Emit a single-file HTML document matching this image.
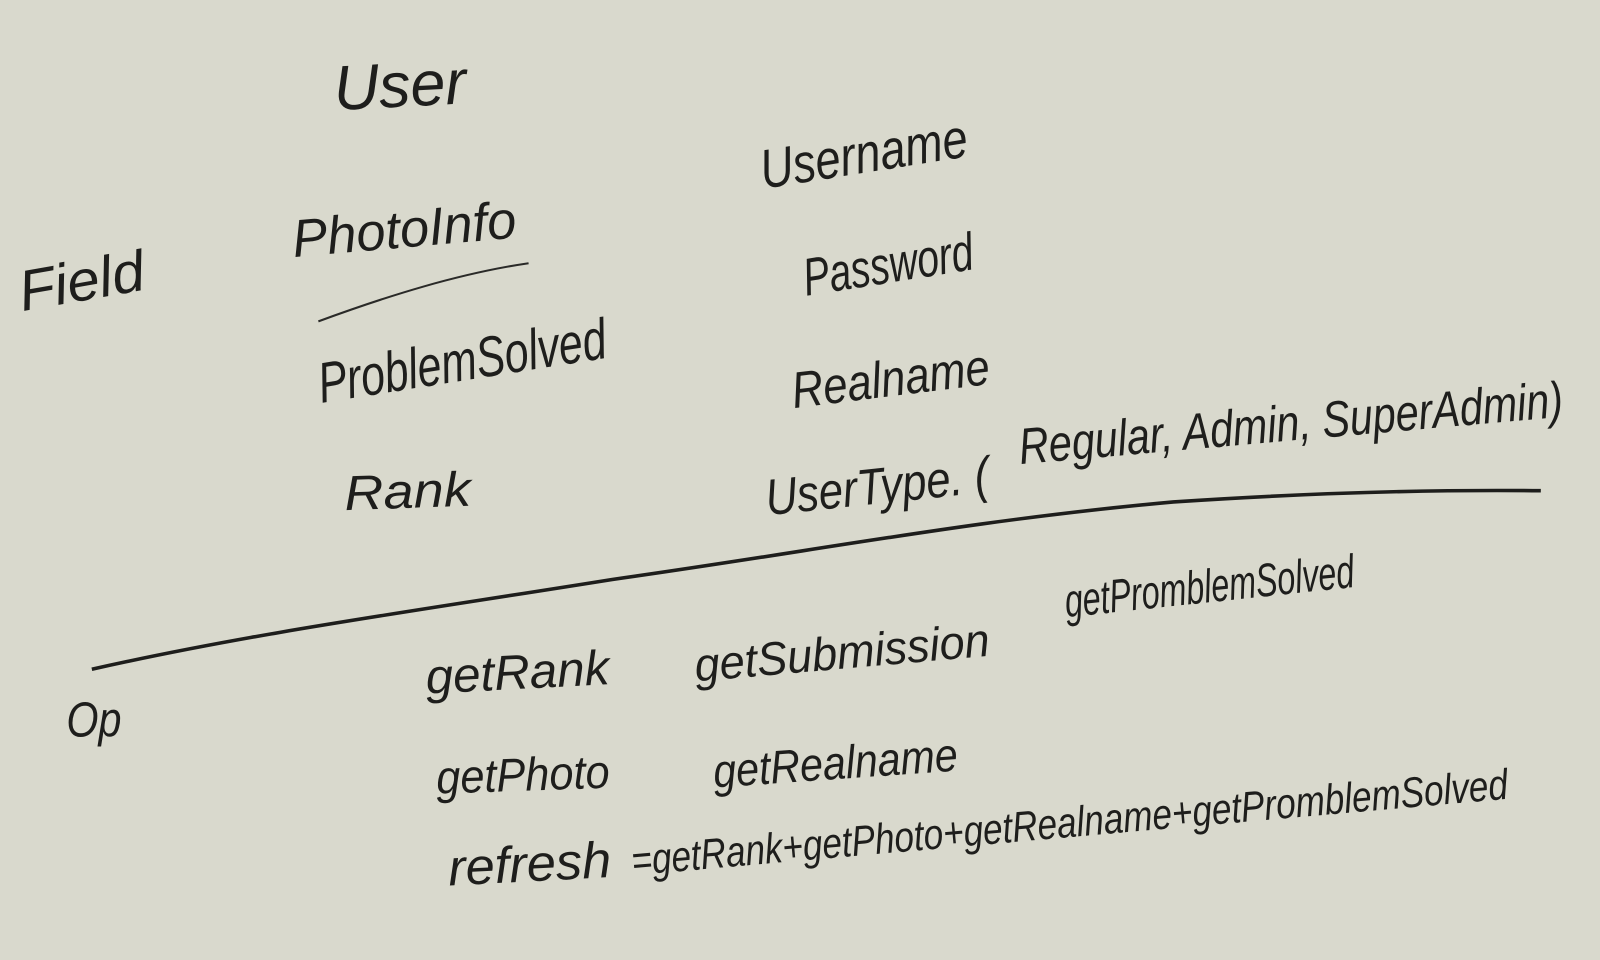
<!DOCTYPE html>
<html><head><meta charset="utf-8"><style>
html,body{margin:0;padding:0;background:#d9d9cd;width:1600px;height:960px;overflow:hidden}
svg{display:block}
text{font-family:"Liberation Sans",sans-serif;font-style:italic;fill:#1e1e1c}
</style></head><body>
<svg width="1600" height="960" viewBox="0 0 1568 941" preserveAspectRatio="none">
<rect width="1568" height="941" fill="#d9d9cd"/>
<g>
<text x="328" y="108" font-size="62" textLength="130" lengthAdjust="spacingAndGlyphs" transform="rotate(-3 328 108)">User</text>
<text x="22" y="305" font-size="56" textLength="124" lengthAdjust="spacingAndGlyphs" transform="rotate(-10 22 305)">Field</text>
<text x="288" y="252" font-size="52" textLength="220" lengthAdjust="spacingAndGlyphs" transform="rotate(-5 288 252)">PhotoInfo</text>
<path d="M312 315 C380 290 450 268 518 258" stroke="#2a2a28" stroke-width="2" fill="none"/>
<text x="315" y="395" font-size="56" textLength="285" lengthAdjust="spacingAndGlyphs" transform="rotate(-9 315 395)">ProblemSolved</text>
<text x="338" y="500" font-size="48" textLength="124" lengthAdjust="spacingAndGlyphs" transform="rotate(-2 338 500)">Rank</text>
<text x="748" y="185" font-size="54" textLength="205" lengthAdjust="spacingAndGlyphs" transform="rotate(-9 748 185)">Username</text>
<text x="790" y="290" font-size="52" textLength="168" lengthAdjust="spacingAndGlyphs" transform="rotate(-9 790 290)">Password</text>
<text x="778" y="400" font-size="50" textLength="195" lengthAdjust="spacingAndGlyphs" transform="rotate(-7 778 400)">Realname</text>
<text x="752" y="505" font-size="50" textLength="220" lengthAdjust="spacingAndGlyphs" transform="rotate(-6 752 505)">UserType. (</text>
<text x="1000" y="455" font-size="50" textLength="535" lengthAdjust="spacingAndGlyphs" transform="rotate(-5 1000 455)">Regular, Admin, SuperAdmin)</text>
<path d="M90 656 C250 620 400 600 600 568 C800 540 950 510 1150 492 C1300 482 1420 480 1510 481" stroke="#1e1e1c" stroke-width="3.5" fill="none"/>
<text x="65" y="722" font-size="48" textLength="54" lengthAdjust="spacingAndGlyphs">Op</text>
<text x="418" y="680" font-size="48" textLength="180" lengthAdjust="spacingAndGlyphs" transform="rotate(-3 418 680)">getRank</text>
<text x="682" y="668" font-size="46" textLength="290" lengthAdjust="spacingAndGlyphs" transform="rotate(-5 682 668)">getSubmission</text>
<text x="1045" y="605" font-size="46" textLength="285" lengthAdjust="spacingAndGlyphs" transform="rotate(-6 1045 605)">getPromblemSolved</text>
<text x="428" y="778" font-size="46" textLength="170" lengthAdjust="spacingAndGlyphs" transform="rotate(-2 428 778)">getPhoto</text>
<text x="700" y="772" font-size="46" textLength="240" lengthAdjust="spacingAndGlyphs" transform="rotate(-4 700 772)">getRealname</text>
<text x="440" y="868" font-size="50" textLength="160" lengthAdjust="spacingAndGlyphs" transform="rotate(-3 440 868)">refresh</text>
<text x="620" y="858" font-size="42" textLength="862" lengthAdjust="spacingAndGlyphs" transform="rotate(-5 620 858)">=getRank+getPhoto+getRealname+getPromblemSolved</text>
</g>
</svg>
</body></html>
